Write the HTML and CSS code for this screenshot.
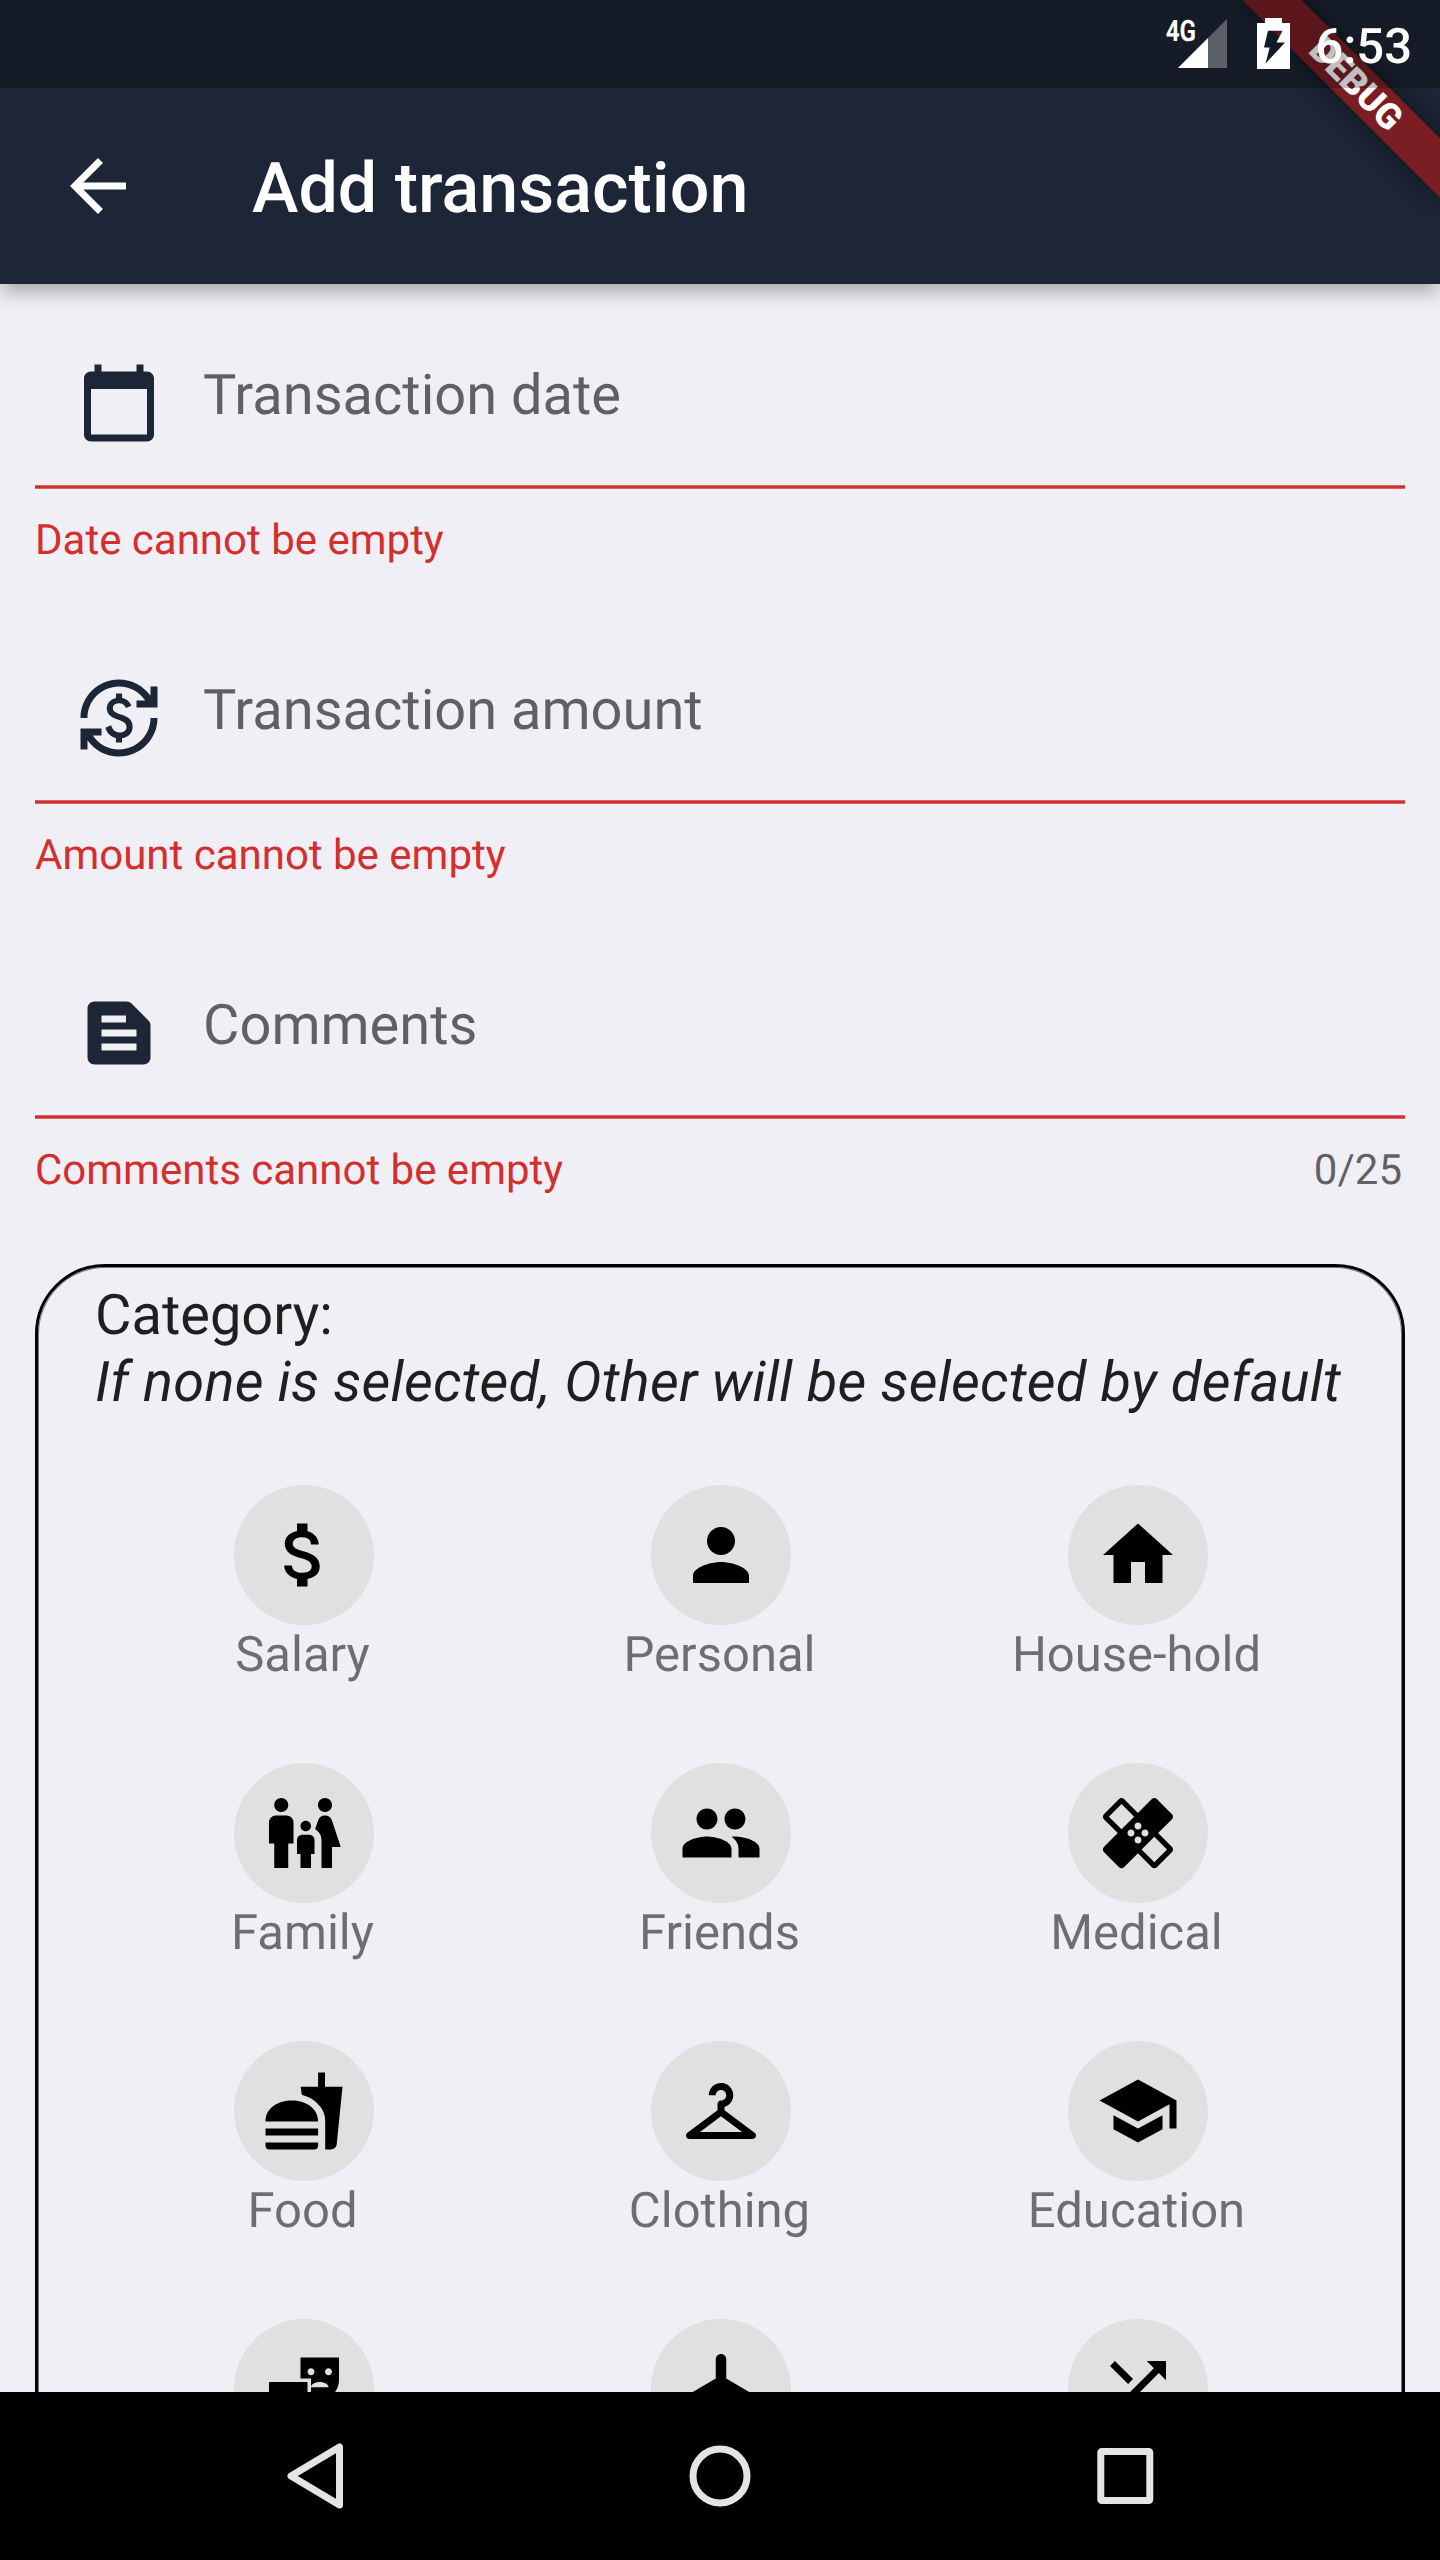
FILE: index.html
```html
<!DOCTYPE html>
<html lang="en">
<head>
<meta charset="utf-8">
<title>Add transaction</title>
<link rel="stylesheet" href="styles.css">
</head>
<body>
<div class="phone">
  <header class="app-bar">
    <svg class="icon" viewBox="0 0 24 24"><path d="M20 11H7.83l5.59-5.59L12 4l-8 8 8 8 1.41-1.41L7.83 13H20v-2z"/></svg>
    <h1 class="title">Add transaction</h1>
    <div class="ribbon-clip"><div class="ribbon">DEBUG</div></div>
    <div class="status-bar">
      <span class="network">4G</span>
      <svg class="signal" viewBox="0 0 49 49"><path class="signal-off" d="M0 49L49 0v49z"/><path d="M0 49L30 19v30z"/></svg>
      <svg class="battery" viewBox="0 0 33 51"><path fill-rule="evenodd" d="M8 0h17v5h8v46H0V5h8zM11 12.7L7 29.5h5.600L8.600 45.500 28 24.500h-8.500L25.500 12.700z"/></svg>
      <span class="clock">6:53</span>
    </div>
  </header>

  <main class="content">
    <section class="field">
      <div class="input">
        <svg class="icon" viewBox="0 0 24 24"><path d="M20 3h-1V1h-2v2H7V1H5v2H4c-1.100 0-2 .9-2 2v16c0 1.100.9 2 2 2h16c1.100 0 2-.9 2-2V5c0-1.100-.9-2-2-2zm0 18H4V8h16v13z"/></svg>
        <span class="label">Transaction date</span>
      </div>
      <div class="rule"></div>
      <div class="helper"><span class="error">Date cannot be empty</span></div>
    </section>
    <section class="field">
      <div class="input">
        <svg class="icon" viewBox="0 0 24 24"><path d="M12.890 11.100c-1.780-.59-2.640-.96-2.640-1.900 0-1.020 1.110-1.390 1.810-1.390 1.310 0 1.790.99 1.900 1.340l1.580-.67c-.15-.44-.82-1.910-2.660-2.230V5h-1.750v1.260c-2.600.56-2.620 2.850-2.620 2.960 0 2.270 2.250 2.910 3.350 3.310 1.580.56 2.280 1.070 2.280 2.030 0 1.130-1.050 1.610-1.980 1.610-1.820 0-2.340-1.870-2.400-2.090l-1.660.67c.63 2.190 2.280 2.780 3.020 2.960V19h1.750v-1.240c.52-.09 3.020-.59 3.020-3.220.01-1.390-.6-2.610-3-3.440zM3 21H1v-6h6v2H4.520c1.610 2.410 4.360 4 7.480 4 4.970 0 9-4.030 9-9h2c0 6.080-4.920 11-11 11-3.720 0-7.010-1.850-9-4.670V21zM1 12C1 5.920 5.920 1 12 1c3.720 0 7.010 1.850 9 4.670V3h2v6h-6V7h2.480C17.870 4.590 15.120 3 12 3c-4.970 0-9 4.030-9 9H1z"/></svg>
        <span class="label">Transaction amount</span>
      </div>
      <div class="rule"></div>
      <div class="helper"><span class="error">Amount cannot be empty</span></div>
    </section>
    <section class="field">
      <div class="input">
        <svg class="icon" viewBox="0 0 24 24"><path d="M20.410 8.410l-4.830-4.830c-.37-.37-.88-.58-1.410-.58H5c-1.100 0-2 .9-2 2v14c0 1.100.9 2 2 2h14c1.100 0 2-.9 2-2V9.830c0-.53-.21-1.040-.59-1.420zM7 7h7v2H7V7zm10 10H7v-2h10v2zm0-4H7v-2h10v2z"/></svg>
        <span class="label">Comments</span>
      </div>
      <div class="rule"></div>
      <div class="helper"><span class="error">Comments cannot be empty</span><span class="counter">0/25</span></div>
    </section>

    <section class="category">
      <p class="heading">Category:</p>
      <p class="heading hint">If none is selected, Other will be selected by default</p>
      <div class="grid">
        <div class="item">
          <div class="disc"><svg class="icon" viewBox="0 0 24 24"><path d="M11.800 10.900c-2.270-.59-3-1.200-3-2.150 0-1.090 1.010-1.850 2.700-1.850 1.780 0 2.440.85 2.500 2.100h2.210c-.07-1.720-1.120-3.300-3.210-3.810V3h-3v2.160c-1.940.42-3.500 1.680-3.500 3.610 0 2.310 1.910 3.460 4.700 4.130 2.500.6 3 1.480 3 2.410 0 .69-.49 1.790-2.700 1.790-2.060 0-2.870-.92-2.980-2.100h-2.200c.12 2.190 1.760 3.420 3.680 3.830V21h3v-2.150c1.950-.37 3.500-1.500 3.500-3.550 0-2.840-2.430-3.810-4.700-4.400z"/></svg></div>
          <span class="name">Salary</span>
        </div>
        <div class="item">
          <div class="disc"><svg class="icon" viewBox="0 0 24 24"><path d="M12 12c2.210 0 4-1.790 4-4s-1.790-4-4-4-4 1.790-4 4 1.790 4 4 4zm0 2c-2.670 0-8 1.340-8 4v2h16v-2c0-2.660-5.330-4-8-4z"/></svg></div>
          <span class="name">Personal</span>
        </div>
        <div class="item">
          <div class="disc"><svg class="icon" viewBox="0 0 24 24"><path d="M10 20v-6h4v6h5v-8h3L12 3 2 12h3v8z"/></svg></div>
          <span class="name">House-hold</span>
        </div>
        <div class="item">
          <div class="disc"><svg class="icon" viewBox="0 0 24 24"><path d="M16 4c0-1.110.89-2 2-2s2 .89 2 2-.89 2-2 2-2-.89-2-2zm4 18v-6h2.500l-2.540-7.630C19.680 7.550 18.920 7 18.060 7h-.12c-.86 0-1.630.55-1.900 1.370l-.86 2.580c1.080.6 1.820 1.730 1.820 3.050v8h3zm-7.500-10.500c.83 0 1.500-.67 1.500-1.500s-.67-1.500-1.500-1.500S11 9.170 11 10s.67 1.500 1.500 1.500zM5.500 6c1.110 0 2-.89 2-2s-.89-2-2-2-2 .89-2 2 .89 2 2 2zm2 16v-7H9V9c0-1.100-.9-2-2-2H4c-1.100 0-2 .9-2 2v6h1.500v7h4zm6.500 0v-4h1v-4c0-.82-.68-1.500-1.500-1.500h-2c-.82 0-1.500.68-1.500 1.500v4h1v4h3z"/></svg></div>
          <span class="name">Family</span>
        </div>
        <div class="item">
          <div class="disc"><svg class="icon" viewBox="0 0 24 24"><path d="M16 11c1.660 0 2.990-1.340 2.990-3S17.660 5 16 5c-1.660 0-3 1.340-3 3s1.340 3 3 3zm-8 0c1.660 0 2.990-1.340 2.990-3S9.660 5 8 5C6.340 5 5 6.340 5 8s1.340 3 3 3zm0 2c-2.330 0-7 1.170-7 3.500V19h14v-2.500c0-2.330-4.670-3.500-7-3.500zm8 0c-.29 0-.62.02-.97.05 1.160.84 1.970 1.970 1.970 3.450V19h6v-2.500c0-2.330-4.670-3.500-7-3.500z"/></svg></div>
          <span class="name">Friends</span>
        </div>
        <div class="item">
          <div class="disc"><svg class="icon" viewBox="0 0 24 24"><path d="M17.730 12.020l3.980-3.980c.39-.39.39-1.020 0-1.410l-4.340-4.340c-.39-.39-1.020-.39-1.410 0l-3.980 3.980L8 2.290C7.800 2.100 7.550 2 7.290 2c-.25 0-.51.1-.7.29L2.250 6.630c-.39.39-.39 1.020 0 1.410l3.980 3.980L2.250 16c-.39.39-.39 1.020 0 1.410l4.340 4.340c.39.39 1.020.39 1.410 0l3.980-3.980 3.980 3.980c.2.2.45.29.71.29.26 0 .51-.1.71-.29l4.340-4.340c.39-.39.39-1.020 0-1.410l-3.990-3.980zM12 9c.55 0 1 .45 1 1s-.45 1-1 1-1-.45-1-1 .45-1 1-1zm-4.710 1.960L3.660 7.340l3.630-3.630 3.620 3.620-3.620 3.630zM10 13c-.55 0-1-.45-1-1s.45-1 1-1 1 .45 1 1-.45 1-1 1zm2 2c-.55 0-1-.45-1-1s.45-1 1-1 1 .45 1 1-.45 1-1 1zm2-4c.55 0 1 .45 1 1s-.45 1-1 1-1-.45-1-1 .45-1 1-1zm2.660 9.340l-3.630-3.620 3.630-3.630 3.620 3.620-3.620 3.630z"/></svg></div>
          <span class="name">Medical</span>
        </div>
        <div class="item">
          <div class="disc"><svg class="icon" viewBox="0 0 24 24"><path d="M18.060 22.990h1.660c.84 0 1.530-.64 1.630-1.460L23 5.050h-5V1h-1.970v4.050h-4.970l.3 2.340c1.710.47 3.310 1.320 4.270 2.260 1.440 1.420 2.430 2.890 2.430 5.290v8.050zM1 21.990V21h15.030v.99c0 .55-.45 1-1.010 1H2.010c-.56 0-1.010-.45-1.010-1zm15.030-7c0-8-15.030-8-15.030 0h15.030zM1.020 17h15v2h-15z"/></svg></div>
          <span class="name">Food</span>
        </div>
        <div class="item">
          <div class="disc"><svg class="icon" viewBox="0 0 24 24"><path d="M21.600 18.200L13 11.750v-.91c1.650-.49 2.800-2.170 2.430-4.050-.26-1.310-1.300-2.400-2.610-2.700C10.540 3.570 8.500 5.300 8.500 7.500h2c0-.83.67-1.500 1.500-1.500s1.500.67 1.500 1.500c0 .84-.69 1.520-1.530 1.500-.54-.01-.97.45-.97.99v1.760L2.400 18.200c-.77.58-.36 1.800.6 1.800h18c.96 0 1.370-1.220.6-1.800zM6 18l6-4.500 6 4.500H6z"/></svg></div>
          <span class="name">Clothing</span>
        </div>
        <div class="item">
          <div class="disc"><svg class="icon" viewBox="0 0 24 24"><path d="M5 13.180v4L12 21l7-3.820v-4L12 17l-7-3.820zM12 3L1 9l11 6 9-4.910V17h2V9L12 3z"/></svg></div>
          <span class="name">Education</span>
        </div>
        <div class="item">
          <div class="disc"><svg class="icon" viewBox="0 0 24 24"><path fill-rule="evenodd" d="M2 16.500C2 19.540 4.460 22 7.500 22s5.500-2.460 5.500-5.500V10H2zM11 3v6h3v2.500c0-.83 1.120-1.500 2.500-1.500s2.500.67 2.500 1.500h-5v2.890c.75.38 1.600.61 2.500.61 3.040 0 5.500-2.460 5.500-5.500V3zM14 8.080c-.55 0-1-.45-1-1s.45-1 1-1 1 .45 1 1-.45 1-1 1zM19 8.080c-.55 0-1-.45-1-1s.45-1 1-1 1 .45 1 1-.45 1-1 1z"/></svg></div>
        </div>
        <div class="item">
          <div class="disc"><svg class="icon" viewBox="0 0 24 24"><path d="M22 16v-2l-8.500-5V3.500c0-.83-.67-1.500-1.500-1.500s-1.500.67-1.500 1.500V9L2 14v2l8.500-2.500V19L8 20.500V22l4-1 4 1v-1.500L13.500 19v-5.500L22 16z"/></svg></div>
        </div>
        <div class="item">
          <div class="disc"><svg class="icon" viewBox="0 0 24 24"><path d="M10.590 9.170L5.410 4 4 5.410l5.170 5.170 1.420-1.410zM14.500 4l2.040 2.040L4 18.590 5.410 20 17.960 7.460 20 9.500V4h-5.500zm.33 9.410l-1.410 1.410 3.130 3.130L14.500 20H20v-5.500l-2.040 2.040-3.130-3.130z"/></svg></div>
        </div>
      </div>
    </section>
  </main>

  <nav class="nav-bar">
    <svg class="nav-icon" viewBox="0 0 84 84"><path d="M18 42L66.500 13v58z"/></svg>
    <svg class="nav-icon" viewBox="0 0 84 84"><circle cx="42" cy="42" r="27"/></svg>
    <svg class="nav-icon" viewBox="0 0 84 84"><rect x="17.800" y="17.500" width="49" height="49" rx="1"/></svg>
  </nav>
</div>
</body>
</html>
```
FILE: styles.css
```css
* {
  box-sizing: border-box;
}

body {
  margin: 0;
  font-family: Roboto, sans-serif;
  text-rendering: geometricPrecision;
}

.phone {
  display: flex;
  flex-direction: column;
  width: 1440px;
  height: 2560px;
  overflow: hidden;
  background: #f0eff5;
}

.icon {
  display: block;
  flex: none;
  width: 84px;
  height: 84px;
  fill: currentColor;
}

/* App bar */
.app-bar {
  position: relative;
  z-index: 1;
  display: flex;
  flex: none;
  align-items: center;
  gap: 112px;
  height: 284px;
  padding: 88px 56px 0;
  color: #fff;
  background: #1d2636;
  box-shadow: 0 10px 18px -2px rgba(0, 0, 0, 0.3);
}

.title {
  margin: 0;
  padding-top: 5px;
  font-size: 70px;
  font-weight: 500;
  line-height: 82px;
}

.ribbon-clip {
  position: absolute;
  top: 0;
  right: 0;
  width: 284px;
  height: 284px;
  overflow: hidden;
}

.ribbon {
  position: absolute;
  top: 63px;
  right: -56px;
  width: 280px;
  height: 42px;
  font-size: 35.7px;
  font-weight: 900;
  line-height: 42px;
  text-align: center;
  background: rgba(177, 25, 25, 0.63);
  box-shadow: 0 0 21px rgba(0, 0, 0, 0.5);
  transform: rotate(45deg);
}

.status-bar {
  position: absolute;
  top: 0;
  left: 0;
  display: flex;
  align-items: flex-start;
  justify-content: flex-end;
  width: 100%;
  height: 88px;
  padding-right: 28px;
  background: rgba(0, 0, 0, 0.25);
}

.network {
  margin: 15px -19px 0 0;
  font-size: 29.5px;
  font-weight: 700;
  line-height: 34px;
  transform: scaleX(0.82);
  transform-origin: right;
}

.signal {
  width: 49px;
  height: 49px;
  margin: 19px 30px 0 0;
  fill: #fff;
}

.signal-off {
  fill: #5c6069;
}

.battery {
  width: 33px;
  height: 51px;
  margin: 18px 26px 0 0;
  fill: #fff;
}

.clock {
  margin-top: 18px;
  font-size: 49px;
  font-weight: 500;
  line-height: 58px;
}

/* Form */
.content {
  flex: 1;
  min-height: 0;
  padding: 35px 35px 0;
  overflow: hidden;
}

.field {
  height: 315px;
}

.input {
  display: flex;
  align-items: center;
  gap: 42px;
  height: 166px;
  padding: 2px 0 0 42px;
  color: #1d2636;
}

.label {
  padding-bottom: 16px;
  font-size: 56px;
  line-height: 66px;
  color: rgba(0, 0, 0, 0.6);
}

.rule {
  height: 4px;
  background: linear-gradient(#da6265 25%, #d32f2f 25% 75%, #da6265 75%);
}

.helper {
  display: flex;
  justify-content: space-between;
  padding: 27px 3px 0 0;
  font-size: 42px;
  line-height: 49px;
}

.error {
  color: #d32f2f;
}

.counter {
  color: rgba(0, 0, 0, 0.6);
}

/* Category picker */
.category {
  height: 1400px;
  padding: 15px 56px 0 57px;
  border: 3px solid #000;
  border-radius: 70px;
  box-shadow: inset 0 0 0 1px rgba(0, 0, 0, 0.5);
}

.heading {
  margin: 0;
  font-size: 56px;
  line-height: 67px;
  color: rgba(0, 0, 0, 0.87);
  white-space: nowrap;
}

.hint {
  font-style: italic;
  letter-spacing: 0.21px;
}

.grid {
  display: grid;
  grid-template-columns: repeat(3, 1fr);
  grid-auto-rows: 278px;
  margin-top: 69px;
}

.item {
  display: flex;
  flex-direction: column;
  align-items: center;
}

.disc {
  display: flex;
  flex: none;
  align-items: center;
  justify-content: center;
  width: 140px;
  height: 140px;
  border-radius: 50%;
  background: #e0e0e0;
}

.name {
  padding: 1px 2px 0 0;
  font-size: 49px;
  line-height: 58px;
  color: rgba(0, 0, 0, 0.54);
}

/* Navigation bar */
.nav-bar {
  display: flex;
  flex: none;
  align-items: center;
  justify-content: center;
  gap: 321px;
  height: 168px;
  background: #000;
}

.nav-icon {
  width: 84px;
  height: 84px;
  fill: none;
  stroke: #e4e4e4;
  stroke-width: 7;
  stroke-linejoin: round;
}
```
